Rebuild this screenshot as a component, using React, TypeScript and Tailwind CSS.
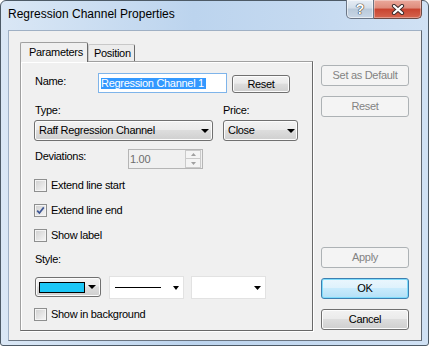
import React from 'react';

const btnNormal =
  'rounded-[3px] border border-[#707070] bg-[linear-gradient(to_bottom,#f2f2f2_0%,#ebebeb_45%,#dddddd_50%,#cfcfcf_100%)] shadow-[inset_0_0_0_1px_#fcfcfc]';
const btnDisabled = 'rounded-[3px] border border-[#adb2b5] bg-[#f4f4f4] text-[#838383]';
const btnDefault =
  'rounded-[3px] border border-[#3c7fb1] bg-[linear-gradient(to_bottom,#eaf6fd_0%,#dff2fc_45%,#c9ebfc_50%,#b4e0f7_100%)] shadow-[inset_0_0_0_1px_#7fdcfb]';

const Arrow = ({ w = 7 }: { w?: number }) => (
  <svg width={w} height="4" viewBox={`0 0 ${w} 4`} className="shrink-0">
    <polygon points={`0,0 ${w},0 ${w / 2},4`} fill="#000" />
  </svg>
);

const Check = ({ checked, label }: { checked?: boolean; label: string }) => (
  <div className="flex h-[13px] items-center">
    <div className="flex h-[13px] w-[13px] shrink-0 items-center justify-center border border-[#8e8f8f] bg-[linear-gradient(135deg,#cfcfcf,#f7f7f7)] shadow-[inset_0_0_0_1px_#f4f4f4]">
      {checked && (
        <svg width="9" height="9" viewBox="0 0 9 9">
          <path d="M1.2 4.6 L3.4 7 L7.8 1.4" stroke="#3d5694" strokeWidth="1.7" fill="none" />
        </svg>
      )}
    </div>
    <span className="ml-[4px] leading-[13px]">{label}</span>
  </div>
);

export default function App() {
  return (
    <div className="h-[347px] w-[429px] overflow-hidden bg-white font-['Liberation_Sans',Arial,sans-serif] text-[11px] tracking-[-0.3px] text-black">
      <div className="flex h-[346px] w-[429px] flex-col rounded-t-[6px] rounded-b-[3px] border border-[#4d5a66] bg-[linear-gradient(to_right,#dae7f5,#bcd4ee_45%,#c4d9f0_70%,#d0e1f4)]">
        {/* title bar */}
        <div className="flex h-[29px] shrink-0 items-start">
          <div className="pl-[7px] pt-[6px] text-[12px] leading-[15px] tracking-normal">Regression Channel Properties</div>
          <div className="ml-auto -mt-px mr-[6px] flex">
            <div className="flex h-[19px] w-[28px] items-center justify-center rounded-bl-[5px] border border-t-0 border-[#6b7686] bg-[linear-gradient(to_bottom,#e6edf5_0%,#d3dee9_45%,#b9c9da_50%,#c9d7e6_100%)] shadow-[inset_0_0_0_1px_rgba(255,255,255,0.55)]">
              <span className="text-[14px] font-bold leading-none text-white [text-shadow:0_0_1px_#333,0_0_1px_#333,0_0_1px_#333]">?</span>
            </div>
            <div className="flex h-[19px] w-[48px] items-center justify-center rounded-br-[5px] border border-l-0 border-t-0 border-[#6b4a45] bg-[linear-gradient(to_bottom,#eaa99c_0%,#de8b7b_45%,#c8432f_50%,#d5654f_100%)] shadow-[inset_0_0_0_1px_rgba(255,255,255,0.35)]">
              <svg width="16" height="11" viewBox="0 0 16 11">
                <path d="M4 2 L12 9 M12 2 L4 9" stroke="#3b2b2b" strokeWidth="4.2" strokeLinecap="round" />
                <path d="M4 2 L12 9 M12 2 L4 9" stroke="#fff" strokeWidth="2.3" strokeLinecap="round" />
              </svg>
            </div>
          </div>
        </div>

        {/* client area */}
        <div className="ml-[7px] flex h-[311px] w-[414px] border border-[#9fb0c4] border-b-[#6a7480] border-r-[#5e6670] bg-[#f0f0f0] pb-[9px] pl-[11px] pr-[12px] pt-[11px]">
          {/* tabs + panel */}
          <div className="flex w-[293px] flex-col">
            <div className="flex h-[19px] items-end">
              <div className="relative z-10 -mb-px h-[20px] w-[68px] rounded-t-[2px] border border-b-0 border-[#a0a0a0] border-r-[#696969] bg-[#f0f0f0] pl-[8px] pt-[3px] leading-[13px]">
                Parameters
              </div>
              <div className="h-[17px] w-[47px] rounded-t-[2px] border border-b-0 border-[#c8c8c8] border-r-[#696969] bg-[#ececec] pl-[5px] pt-[2px] leading-[13px]">
                Position
              </div>
            </div>
            <div className="flex flex-1 flex-col border border-[#a0a0a0] border-b-[#696969] border-r-[#696969] pl-[13px] shadow-[inset_1px_1px_0_#fff,1px_1px_0_#fff]">
              {/* Name */}
              <div className="mt-[11px] flex h-[20px] items-start">
                <span className="w-[64px] pl-[1px] pt-[2px] leading-[13px]">Name:</span>
                <div className="flex h-[20px] w-[129px] items-center border border-[#7eb4ea] bg-white pl-[2px]">
                  <span className="bg-[#3399ff] pr-[2px] leading-[11px] text-white">Regression Channel 1</span>
                </div>
                <div className={`ml-[5px] mt-[2px] flex h-[18px] w-[58px] items-center justify-center leading-[13px] ${btnNormal}`}>Reset</div>
              </div>

              {/* Type / Price labels */}
              <div className="mt-[11px] flex h-[13px] leading-[13px]">
                <span className="w-[189px] pl-[1px]">Type:</span>
                <span>Price:</span>
              </div>
              <div className="mt-[3px] flex h-[21px]">
                <div className={`flex h-[21px] w-[179px] items-center justify-between pl-[4px] pr-[3px] leading-[13px] ${btnNormal}`}>
                  <span>Raff Regression Channel</span>
                  <Arrow w={8} />
                </div>
                <div className={`ml-[10px] flex h-[21px] w-[75px] items-center justify-between pl-[4px] pr-[2px] leading-[13px] ${btnNormal}`}>
                  <span>Close</span>
                  <Arrow w={8} />
                </div>
              </div>

              {/* Deviations */}
              <div className="mt-[8px] flex h-[20px] items-start">
                <span className="w-[94px] pl-[1px] pt-[1px] leading-[13px]">Deviations:</span>
                <div className="flex h-[20px] w-[75px] items-center border border-[#b5b5b5] bg-[#f0f0f0] pl-[1px]">
                  <span className="flex-1 leading-[13px] text-[#6d6d6d]">1.00</span>
                  <div className="mr-[1px] flex flex-col">
                    <div className="flex h-[9px] w-[16px] items-center justify-center border border-[#cacaca] bg-[#f4f4f4]">
                      <svg width="5" height="3" viewBox="0 0 5 3"><polygon points="0,3 5,3 2.5,0" fill="#a0a0a0" /></svg>
                    </div>
                    <div className="flex h-[9px] w-[16px] items-center justify-center border border-t-0 border-[#cacaca] bg-[#f4f4f4]">
                      <svg width="5" height="3" viewBox="0 0 5 3"><polygon points="0,0 5,0 2.5,3" fill="#a0a0a0" /></svg>
                    </div>
                  </div>
                </div>
              </div>

              <div className="mt-[10px]"><Check label="Extend line start" /></div>
              <div className="mt-[12px]"><Check checked label="Extend line end" /></div>
              <div className="mt-[12px]"><Check label="Show label" /></div>

              <div className="mt-[11px] h-[13px] pl-[1px] leading-[13px]">Style:</div>

              <div className="mt-[10px] flex h-[23px] items-start">
                <div className={`ml-[1px] mt-[1px] flex h-[20px] w-[66px] items-center pl-[3px] ${btnNormal}`}>
                  <div className="h-[11px] w-[46px] border border-black bg-[#1cc7f6]" />
                  <div className="ml-[3px]"><Arrow w={8} /></div>
                </div>
                <div className="ml-[8px] flex h-[23px] w-[75px] items-center border border-[#e2e2e2] bg-white pl-[5px]">
                  <div className="h-px w-[46px] bg-black" />
                  <div className="ml-[12px]"><Arrow w={6} /></div>
                </div>
                <div className="ml-[7px] flex h-[23px] w-[75px] items-center justify-end border border-[#e2e2e2] bg-white pr-[4px]">
                  <Arrow w={7} />
                </div>
              </div>

              <div className="mt-[9px]"><Check label="Show in background" /></div>
            </div>
          </div>

          {/* right buttons */}
          <div className="ml-[8px] flex w-[88px] flex-col pb-px pt-[23px] leading-[13px]">
            <div className={`flex h-[21px] items-center justify-center ${btnDisabled}`}>Set as Default</div>
            <div className={`mt-[10px] flex h-[21px] items-center justify-center ${btnDisabled}`}>Reset</div>
            <div className="flex-1" />
            <div className={`flex h-[21px] items-center justify-center ${btnDisabled}`}>Apply</div>
            <div className={`mt-[10px] flex h-[21px] items-center justify-center ${btnDefault}`}>OK</div>
            <div className={`mt-[10px] flex h-[21px] items-center justify-center ${btnNormal}`}>Cancel</div>
          </div>
        </div>
      </div>
    </div>
  );
}
